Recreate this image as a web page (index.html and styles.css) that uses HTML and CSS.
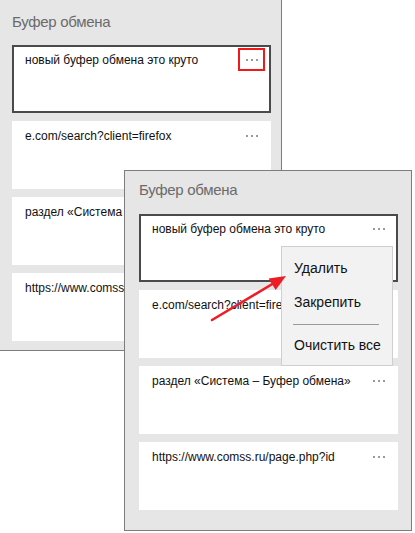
FILE: index.html
```html
<!DOCTYPE html>
<html lang="ru">
<head>
  <meta charset="UTF-8" />
  <title>Буфер обмена</title>
  <link rel="stylesheet" href="styles.css">
</head>
<body>
  <div class="desk">

    <!-- окно на заднем плане -->
    <div class="clip clip-back">
      <div class="clip-title">Буфер обмена</div>
      <div class="clip-list">
        <div class="item selected">
          <div class="item-text">новый буфер обмена это круто</div>
          <button class="more marked"><span></span><span></span><span></span></button>
        </div>
        <div class="item">
          <div class="item-text">e.com/search?client=firefox</div>
          <button class="more"><span></span><span></span><span></span></button>
        </div>
        <div class="item">
          <div class="item-text">раздел «Система – Буфер обмена»</div>
          <button class="more"><span></span><span></span><span></span></button>
        </div>
        <div class="item">
          <div class="item-text">https://www.comss.ru/page.php?id</div>
          <button class="more"><span></span><span></span><span></span></button>
        </div>
      </div>
    </div>

    <!-- окно с открытым меню -->
    <div class="clip clip-front">
      <div class="clip-title">Буфер обмена</div>
      <div class="clip-list">
        <div class="item selected">
          <div class="item-text">новый буфер обмена это круто</div>
          <button class="more"><span></span><span></span><span></span></button>
        </div>
        <div class="item">
          <div class="item-text">e.com/search?client=firefox</div>
          <button class="more"><span></span><span></span><span></span></button>
        </div>
        <div class="item">
          <div class="item-text">раздел «Система – Буфер обмена»</div>
          <button class="more"><span></span><span></span><span></span></button>
        </div>
        <div class="item">
          <div class="item-text">https://www.comss.ru/page.php?id</div>
          <button class="more"><span></span><span></span><span></span></button>
        </div>
      </div>

      <div class="menu">
        <div class="menu-item">Удалить</div>
        <div class="menu-item">Закрепить</div>
        <div class="menu-sep"></div>
        <div class="menu-item">Очистить все</div>
      </div>
    </div>

    <!-- стрелка-пометка -->
    <svg class="arrow" width="415" height="533" viewBox="0 0 415 533">
      <line x1="212" y1="320" x2="274" y2="283" stroke="#ee1c24" stroke-width="2.5" stroke-linecap="round" />
      <polygon points="286,276 275.6,290 268.6,278.4" fill="#ee1c24" />
    </svg>
  </div>
</body>
</html>
```

FILE: styles.css
```css
* { box-sizing: border-box; }
body {
  margin: 0;
  background: #fff;
  font-family: 'Liberation Sans', Arial, sans-serif;
  color: #111;
}
.desk {
  position: relative;
  width: 415px;
  height: 533px;
  overflow: hidden;
}
.clip {
  position: absolute;
  background: #e6e6e6;
  display: flex;
  flex-direction: column;
}
.clip-back {
  left: 0;
  top: 0;
  width: 282px;
  height: 351px;
  padding: 0 10px 0 12px;
  border-right: 1px solid #7d7d7d;
  border-bottom: 1px solid #7d7d7d;
}
.clip-front {
  left: 124px;
  top: 170px;
  width: 288px;
  height: 361px;
  padding: 0 13px 0 14px;
  border: 1px solid #7d7d7d;
}
.clip-title {
  height: 45px;
  padding: 11px 0 0 0;
  font-size: 15px;
  line-height: 22px;
  letter-spacing: -0.3px;
  color: #6b6b6b;
}
.clip-front .clip-title {
  height: 43px;
  padding-top: 8px;
}
.clip-list {
  display: flex;
  flex-direction: column;
  gap: 8px;
}
.item {
  height: 68px;
  background: #fff;
  border: 2px solid transparent;
  display: flex;
  align-items: flex-start;
  padding: 1px 4px 0 11px;
}
.item.selected {
  border-color: #4a4a4a;
}
.item-text {
  flex: 1;
  padding-top: 3px;
  font-size: 12px;
  line-height: 18px;
  white-space: nowrap;
  overflow: hidden;
}
.more {
  width: 27px;
  height: 23px;
  border: 2px solid transparent;
  background: none;
  padding: 0;
  display: flex;
  align-items: center;
  justify-content: center;
  gap: 3px;
}
.more span {
  width: 2px;
  height: 2px;
  background: #9a9a9a;
}
.more.marked {
  border-color: #f01818;
}
.menu {
  position: absolute;
  left: 156px;
  top: 75px;
  width: 112px;
  height: 120px;
  background: #f2f2f2;
  border: 1px solid #cfcfcf;
  padding-top: 4px;
}
.menu-item {
  height: 34px;
  padding: 7px 0 0 12px;
  font-size: 14px;
  line-height: 20px;
  color: #111;
}
.menu-sep {
  height: 1px;
  margin: 5px 13px 3px 11px;
  background: #9a9a9a;
}
.arrow {
  position: absolute;
  left: 0;
  top: 0;
  pointer-events: none;
}
```
